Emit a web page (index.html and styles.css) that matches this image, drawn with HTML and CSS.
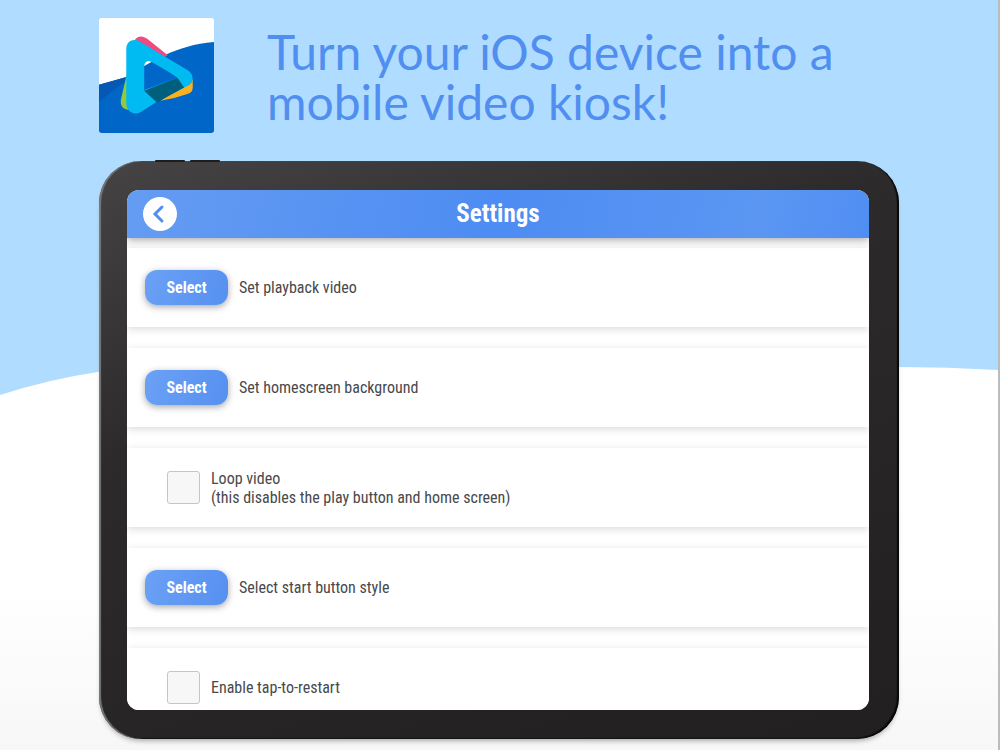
FILE: index.html
```html
<!DOCTYPE html>
<html lang="en">
<head>
    <meta charset="utf-8">
    <title>Mobile Video Kiosk</title>
    <link rel="stylesheet" href="styles.css">
</head>
<body>
    <svg class="backdrop" viewBox="0 0 1000 750" preserveAspectRatio="none" aria-hidden="true">
        <defs>
            <linearGradient id="ground" x1="0" y1="0" x2="0" y2="1">
                <stop offset="0.6" stop-color="#fff"/>
                <stop offset="1" stop-color="#f7f7f7"/>
            </linearGradient>
        </defs>
        <path d="M0 395 Q50 379 98 372 C340 335 760 366 899 367 Q950 367 1000 370 V750 H0Z" fill="url(#ground)"/>
    </svg>

    <header class="promo">
        <svg class="logo" viewBox="0 0 346 346" role="img" aria-label="Video kiosk logo">
            <defs>
                <clipPath id="tile"><rect width="346" height="346" rx="8"/></clipPath>
            </defs>
            <g clip-path="url(#tile)">
                <rect width="346" height="346" fill="#fff"/>
                <path d="M0 201 L80 178 C160 130 230 82 346 72 V346 H0Z" fill="#0066c8"/>
                <path d="M0 201 L80 178 V192 Q38 220 0 252Z" fill="#0558b3"/>
                <path d="M84 168 L66 245 C63 264 72 275 92 277Z" fill="#95c83d"/>
                <path d="M107 68 C115 51 133 53 146 63 L207 112 L190 122Z" fill="#ec4b83"/>
                <path d="M282 186 V209 Q282 224 266 229 L226 241 L185 249Z" fill="#fbb01e"/>
                <path fill-rule="evenodd" d="M82 93 C82 69 105 59 125 72 L267 157 Q282 166 282 184 Q282 195 270 202 L173 253 L127 282 C108 295 82 282 82 258Z
                    M136 217 L236 180 L213 164 L157 132 C147 126 136 132 136 148Z" fill="#00baf2"/>
                <path d="M136 219 L236 180 L256 209 L174 254Z" fill="#005f7d"/>
            </g>
        </svg>
        <h1>Turn your iOS device into a<br>mobile video kiosk!</h1>
    </header>

    <main class="tablet">
        <div class="screen">
            <div class="topbar">
                <button class="back" aria-label="Back">
                    <svg viewBox="0 0 34 34"><path d="M19 10 L12 17 L19 24"/></svg>
                </button>
                <h2>Settings</h2>
            </div>
            <div class="settings">
                <div class="row">
                    <button class="select" id="video">Select</button>
                    <label for="video">Set playback video</label>
                </div>
                <div class="row">
                    <button class="select" id="background">Select</button>
                    <label for="background">Set homescreen background</label>
                </div>
                <div class="row check">
                    <input type="checkbox" id="loop">
                    <label for="loop">Loop video<br>(this disables the play button and home screen)</label>
                </div>
                <div class="row">
                    <button class="select" id="style">Select</button>
                    <label for="style">Select start button style</label>
                </div>
                <div class="row check">
                    <input type="checkbox" id="restart">
                    <label for="restart">Enable tap-to-restart</label>
                </div>
            </div>
        </div>
    </main>
</body>
</html>
```
FILE: styles.css
```css
* {
    box-sizing: border-box;
}

body {
    margin: 0;
    min-height: 100vh;
    position: relative;
    background: #b0dcff;
    border-right: 2px solid #b9bcc0;
    font-family: "Roboto Condensed", "Liberation Sans Narrow", Roboto, sans-serif;
}

.backdrop {
    position: absolute;
    width: 100%;
    height: 100%;
    z-index: -1;
}

.promo {
    display: flex;
    gap: 53px;
    margin: 0 99px;
    padding-top: 18px;
}

.logo {
    width: 115px;
    height: 115px;
    flex: none;
}

h1 {
    margin: 9px 0 0;
    font-family: Lato, "Open Sans", sans-serif;
    font-size: 48px;
    font-weight: 400;
    line-height: 50px;
    color: #508ff0;
    white-space: nowrap;
}

.tablet {
    position: relative;
    margin: 28px 99px 0;
    padding: 29px 30px 29px 28px;
    border-radius: 42px;
    background: linear-gradient(160deg, #454344 0%, #2c2a2b 35%, #211f20 100%);
    box-shadow: inset 2px 0 1px #77797b, inset -2px -1px 1px #080808, 0 4px 5px -2px #aaa;
}

/* volume buttons on the top edge */
.tablet::before,
.tablet::after {
    content: "";
    position: absolute;
    top: -1px;
    left: 56px;
    width: 30px;
    height: 2px;
    border-radius: 1px;
    background: #1d1d1f;
}

.tablet::after {
    left: 91px;
}

.screen {
    height: 520px;
    overflow: hidden;
    border-radius: 12px;
    background: #fff;
}

.topbar {
    position: relative;
    z-index: 1;
    display: grid;
    grid-template-columns: 50px 1fr 50px;
    align-items: center;
    height: 48px;
    background: linear-gradient(100deg, #659cf3 0%, #4d8cf2 50%, #5b96f2 85%, #508ef2 100%);
    box-shadow: 0 2px 8px rgba(0, 0, 0, 0.35);
}

.back {
    width: 34px;
    height: 34px;
    margin-left: 16px;
    padding: 0;
    border: 0;
    border-radius: 50%;
    background: #fff;
}

.back svg {
    display: block;
    fill: none;
    stroke: #508ef0;
    stroke-width: 3;
    stroke-linecap: round;
}

h2 {
    margin: 0;
    font-size: 25px;
    line-height: 30px;
    text-align: center;
    color: #fff;
}

.settings {
    display: flex;
    flex-direction: column;
    gap: 21px;
    padding-top: 10px;
}

.row {
    display: flex;
    align-items: center;
    flex: none;
    gap: 11px;
    height: 79px;
    padding-left: 18px;
    background: #fff;
    box-shadow: 0 2px 8px rgba(0, 0, 0, 0.15);
    font-size: 16px;
    line-height: 19px;
    color: #48494b;
}

.check {
    padding-left: 40px;
}

.select {
    width: 83px;
    height: 35px;
    padding: 0;
    border: 0;
    border-radius: 12px;
    background: linear-gradient(110deg, #6ba1f5, #5690f0);
    box-shadow: 0 2px 7px rgba(0, 0, 0, 0.35);
    font: bold 16px "Roboto Condensed", "Liberation Sans Narrow", Roboto, sans-serif;
    color: #fff;
}

.row input {
    appearance: none;
    width: 33px;
    height: 33px;
    margin: 0;
    border: 1px solid #c5c5c5;
    border-radius: 3px;
    background: #f7f7f7;
}
```
